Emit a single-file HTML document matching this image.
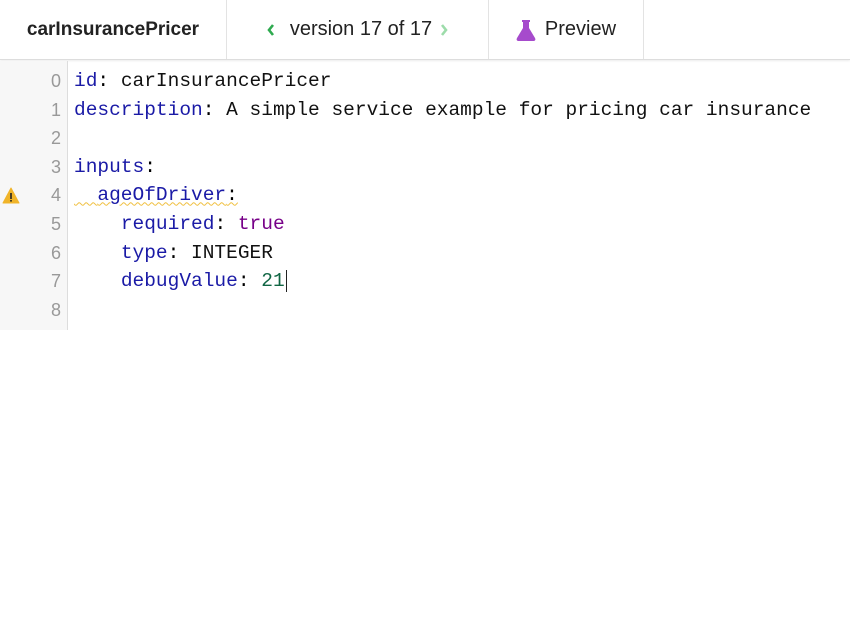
<!DOCTYPE html>
<html><head><style>
body{margin:0;width:850px;height:625px;background:#fff;overflow:hidden;position:relative;font-family:"Liberation Sans",sans-serif}
.hdr{position:absolute;left:0;top:0;width:850px;height:59px;border-bottom:1px solid #ddd;box-shadow:0 1px 2px rgba(0,0,0,.08)}
.tab{position:absolute;top:0;height:59px;border-right:1px solid #e3e3e3;display:flex;align-items:center;justify-content:center;font-size:20px;color:#222}
.gut{position:absolute;left:0;top:61px;width:67px;height:269px;background:#f7f7f7;border-right:1px solid #ddd}
.code{position:absolute;left:0;top:67px;font-family:"Liberation Mono",monospace;font-size:19.5px}
.ln{position:absolute;height:28.6px;line-height:28.6px;white-space:pre}
.n{position:absolute;width:61px;text-align:right;color:#999;font-size:18px;font-family:"Liberation Sans",sans-serif}
.t{position:absolute;left:74px}
.k{color:#1a1aa6}.s{color:#111}.b{color:#770088}.g{color:#116644}
</style></head><body>
<div class="hdr">
<div class="tab" style="left:0;width:226px;font-weight:600;font-size:19px">carInsurancePricer</div>
<div class="tab" style="left:227px;width:261px"><svg width="10" height="14" viewBox="0 0 10 14" style="margin-right:14px"><path d="M7 2L3 7l4 5" fill="none" stroke="#2eaa4f" stroke-width="2.6"/></svg>version 17 of 17<svg width="10" height="14" viewBox="0 0 10 14" style="margin-left:7px"><path d="M3 2l4 5-4 5" fill="none" stroke="#9ddcaa" stroke-width="2.6"/></svg></div>
<div class="tab" style="left:489px;width:154px"><svg width="20" height="22" viewBox="0 0 20 22" style="margin-right:9px"><path d="M6 1h8v2h-1v6l6 10c1 2 0 3-2 3H3c-2 0-3-1-2-3l6-10V3H6z" fill="#a64bcc"/></svg>Preview</div>
</div>
<div class="gut"></div>
<svg style="position:absolute;left:2px;top:187px" width="18" height="17" viewBox="0 0 18 17"><path d="M9 1L17 16H1z" fill="#f0b429" stroke="#f0b429" stroke-linejoin="round"/><rect x="8.2" y="6" width="1.6" height="6" fill="#222"/><rect x="8.2" y="13" width="1.6" height="1.6" fill="#222"/></svg>
<div class="code">
<div class="ln" style="top:0"><span class="n">0</span><span class="t"><span class="k">id</span>: <span class="s">carInsurancePricer</span></span></div>
<div class="ln" style="top:28.6px"><span class="n">1</span><span class="t"><span class="k">description</span>: <span class="s">A simple service example for pricing car insurance</span></span></div>
<div class="ln" style="top:57.2px"><span class="n">2</span></div>
<div class="ln" style="top:85.8px"><span class="n">3</span><span class="t"><span class="k">inputs</span>:</span></div>
<div class="ln" style="top:114.4px"><span class="n">4</span><span class="t" style="text-decoration:underline wavy #f0c040;text-decoration-thickness:1px">  <span class="k">ageOfDriver</span>:</span></div>
<div class="ln" style="top:143px"><span class="n">5</span><span class="t">    <span class="k">required</span>: <span class="b">true</span></span></div>
<div class="ln" style="top:171.6px"><span class="n">6</span><span class="t">    <span class="k">type</span>: <span class="s">INTEGER</span></span></div>
<div class="ln" style="top:200.2px"><span class="n">7</span><span class="t">    <span class="k">debugValue</span>: <span class="g">21</span><span style="border-left:1.5px solid #222;margin-left:1px"></span></span></div>
<div class="ln" style="top:228.8px"><span class="n">8</span></div>
</div>
</body></html>
